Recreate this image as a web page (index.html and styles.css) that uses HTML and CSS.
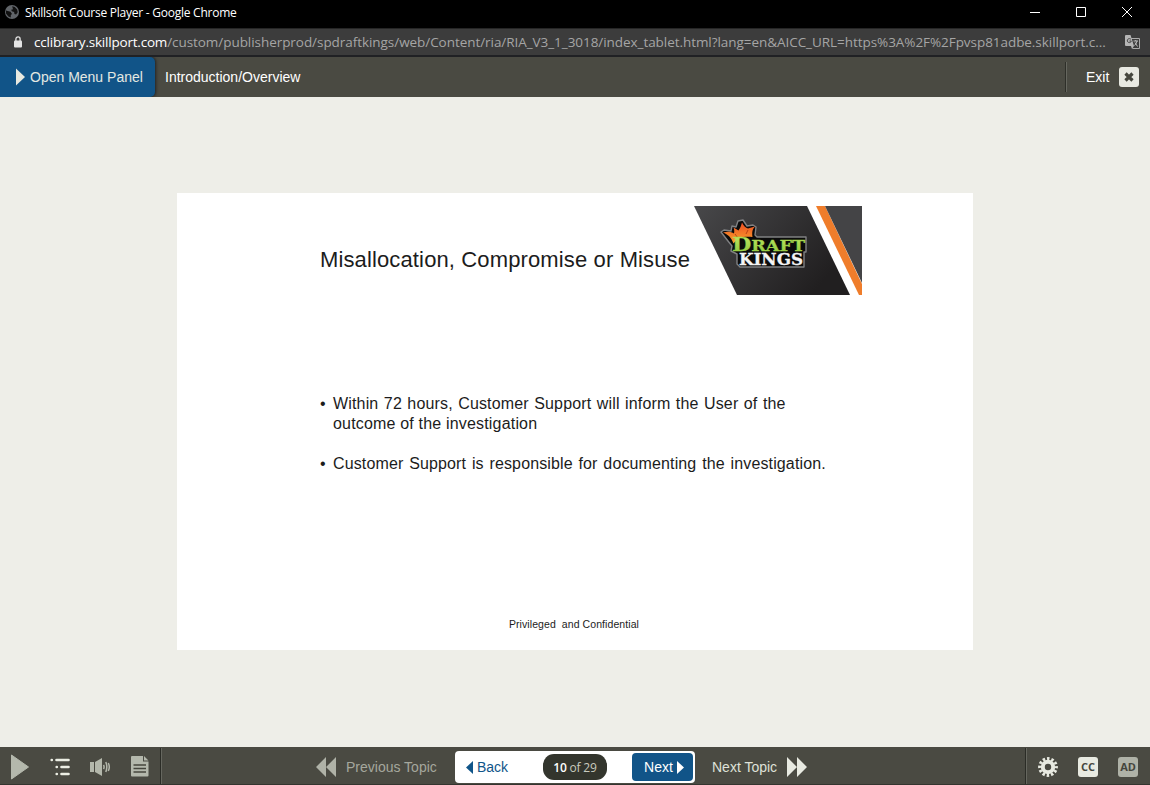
FILE: index.html
```html
<!DOCTYPE html>
<html lang="en">
<head>
<meta charset="utf-8">
<title>Skillsoft Course Player</title>
<link rel="stylesheet" href="styles.css">
</head>
<body>
<div class="titlebar">
  <svg class="globe" width="14" height="14" viewBox="0 0 14 14"><circle cx="7" cy="7" r="7" fill="#606469"/><path d="M1 5.5 5.5 6.8 7 9 5.8 10v2.6L3.4 11.5 1 8.5ZM7.2 1.2l2.6.8 2.3 2.5.6 2.8-1.6 2.2-1.6-.6-.4-2-2.3-.6-.6-1.5L8 4.3Z" fill="#111"/></svg>
  <span class="title">Skillsoft Course Player - Google Chrome</span>
  <svg class="wincontrols" width="104" height="12" viewBox="0 0 104 12" fill="none" stroke="#fff"><path d="M0 6.5h10M46.5 1.5h9v9h-9zM92 1l10 10M102 1 92 11"/></svg>
</div>
<div class="urlbar">
  <svg class="lock" width="8" height="12" viewBox="0 0 8 12"><path d="M1.9 5V3a2.1 2.1 0 0 1 4.2 0v2" fill="none" stroke="#e4e4e4" stroke-width="1.3"/><rect y="4.5" width="8" height="7" rx="1" fill="#e4e4e4"/></svg>
  <span class="url"><span class="domain">cclibrary.skillport.com</span><span class="path">/custom/publisherprod/spdraftkings/web/Content/ria/RIA_V3_1_3018/index_tablet.html?lang=en&amp;AICC_URL=https%3A%2F%2Fpvsp81adbe.skillport.c...</span></span>
  <svg class="translate" width="15" height="15" viewBox="0 0 15 15"><path d="M5 3.500h9.500v10H7.500" fill="none" stroke="#aaa"/><path d="M0 1q0-1 1-1h4.500L9 11H1q-1 0-1-1ZM6 11h3l-2 3Z" fill="#b5b5b5"/><path d="M6 4.500A2 2 0 1 0 6.300 6H4.400" fill="none" stroke="#444"/><path d="M8.500 6H13M10.700 5v1M12 6q-.7 3-2.500 4.500M10 7.500l2.500 4" fill="none" stroke="#bbb"/></svg>
</div>
<header class="topbar">
  <div class="menu-btn"><svg width="9" height="18" viewBox="0 0 9 18"><path d="M0 .5 9 9 0 17.500Z" fill="#e8e9e0"/></svg><span>Open Menu Panel</span></div>
  <span class="crumb">Introduction/Overview</span>
  <div class="exit"><span>Exit</span><span class="exit-x"><svg width="10" height="10" viewBox="0 0 10 10"><path d="m1.500 1.500 7 7m0-7-7 7" stroke="#45463d" stroke-width="3.200"/></svg></span></div>
</header>
<main class="stage">
  <section class="slide">
    <div class="slide-head">
      <h1>Misallocation, Compromise or Misuse</h1>
      <svg class="banner" width="168" height="90" viewBox="0 0 168 90">
        <defs>
          <linearGradient id="dark" x2="1" y2=".5"><stop stop-color="#48484a"/><stop offset="1" stop-color="#211f20"/></linearGradient>
          <linearGradient id="crown" x2="0" y2="1"><stop stop-color="#ee4d23"/><stop offset="1" stop-color="#f8a32b"/></linearGradient>
          <linearGradient id="green" x2="0" y2="1"><stop stop-color="#c3ea68"/><stop offset="1" stop-color="#8cc63c"/></linearGradient>
        </defs>
        <path d="M0 0H113L156 89H43Z" fill="url(#dark)"/>
        <path d="M122 0h9l37 78v11h-3Z" fill="#ef7d2b"/>
        <path d="M131 0h37v77Z" fill="#444446"/>
        <path d="m34 35-7-9 3-2 7 1 1-5 4 1 2-6 5-1 4 6 6-1 3 2-1 8 2 2h49v15h-2v15H46l-3-3V48l-6-3 1-5Z" fill="#0b0b0b" stroke="#808183" stroke-width="1.400" stroke-linejoin="round"/>
        <path d="M39.500 37.500C37 31 34 28.500 29 26.500c5-1.500 8-1 11 1 .5-2 .3-4-.5-6l5 3c2-2.500 2.500-5 3.500-8 1.500 3.500 3.500 5 6 6l7-2c-3 3-3 6-2.500 10.500-9-1-14 .5-19 6.500Z" fill="url(#crown)"/>
        <path d="m41 28 3 4M54 24l-2 4" stroke="#a83612" stroke-width=".8" fill="none"/>
        <text class="logo green" x="38" y="45" textLength="73" lengthAdjust="spacingAndGlyphs"><tspan class="cap">D</tspan>RAFT</text>
        <text class="logo white" x="45" y="59" textLength="64" lengthAdjust="spacingAndGlyphs">KINGS</text>
      </svg>
    </div>
    <ul class="points">
      <li><span class="l1">Within 72 hours, Customer Support will inform the User of the</span><br><span class="l2">outcome of the investigation</span></li>
      <li><span class="l3">Customer Support is responsible for documenting the investigation.</span></li>
    </ul>
    <div class="note">Privileged&nbsp; and Confidential</div>
  </section>
</main>
<footer class="controls">
  <div class="tools">
    <svg width="19" height="26" viewBox="0 0 19 26"><path d="M1.500 1 18.500 13 1.500 25Z" fill="#b4b8ac" stroke="#b4b8ac" stroke-linejoin="round"/></svg>
    <svg class="i-list" width="20" height="18" viewBox="0 0 20 18" fill="none" stroke="#eceee4" stroke-width="2.600" stroke-linecap="round"><path d="M1.700 2h.1M6.500 2h12M6.700 9h.1M11.500 9h7M6.700 16h.1M11.500 16h7"/></svg>
    <svg class="i-sound" width="21" height="18" viewBox="0 0 21 18"><path d="M0 4h4v10H0zM5 4l7-4v18l-7-4Z" fill="#b4b8ac"/><path d="M13.500 7q1.200 2 0 4M15.800 4q2 5 0 10M18.300 5q2 4 0 8" fill="none" stroke="#b4b8ac" stroke-width="1.500"/></svg>
    <svg class="i-doc" width="18" height="21" viewBox="0 0 18 21"><path d="M1 0h11v5.500h5.500V19.500q0 1-1 1H1q-1 0-1-1V1q0-1 1-1ZM13 0l4.500 4.500H13Z" fill="#b4b8ac"/><path d="M2.500 9h12.500M2.500 12.500h12.500M2.500 16h12.500" stroke="#45463d" stroke-width="1.400"/></svg>
  </div>
  <nav class="nav">
    <svg width="20" height="20" viewBox="0 0 20 20"><path d="M10 0v20L0 10ZM20 0v20L10 10Z" fill="#afb2a7"/></svg>
    <span class="prev">Previous Topic</span>
    <div class="pager">
      <span class="back"><svg width="7" height="13" viewBox="0 0 7 13"><path d="M7 0v13L0 6.500Z" fill="#105589"/></svg>Back</span>
      <span class="count"><b>10</b> of 29</span>
      <span class="next">Next<svg width="7" height="13" viewBox="0 0 7 13"><path d="M0 0v13l7-6.500Z" fill="#fff"/></svg></span>
    </div>
    <span class="nexttopic">Next Topic</span>
    <svg width="20" height="20" viewBox="0 0 20 20"><path d="M0 0v20l10-10ZM10 0v20l10-10Z" fill="#e8eae1"/></svg>
  </nav>
  <div class="options">
    <svg width="20" height="20" viewBox="-10 -10 20 20"><circle r="5.200" fill="none" stroke="#e8eae1" stroke-width="4"/><circle r="8.400" fill="none" stroke="#e8eae1" stroke-width="3" stroke-dasharray="2.500 1.898" stroke-dashoffset="1.250"/></svg>
    <span class="chip">CC</span>
    <span class="chip dim">AD</span>
  </div>
</footer>
</body>
</html>
```
FILE: styles.css
```css
* { box-sizing: border-box; }
body { margin: 0; width: 1150px; height: 785px; overflow: hidden; display: flex; flex-direction: column; font: 14px/20px "Liberation Sans", Arial, sans-serif; background: #eeeee8; }
svg { display: block; flex: none; }
span { white-space: nowrap; }
.titlebar { height: 28px; background: #000; color: #fff; display: flex; align-items: center; padding: 0 16px 3px 5px; font: 12px/20px "Open Sans", "Noto Sans", sans-serif; }
.globe { margin-top: -1px; }
.title { margin-left: 6px; letter-spacing: -.245px; }
.wincontrols { margin-left: auto; margin-top: -1px; }
.urlbar { height: 29px; background: #3c3c3c; border-top: 1px solid #252525; border-bottom: 2px solid #202124; display: flex; align-items: center; padding: 0 10px 0 14px; font: 13.5px/20px "Open Sans", "Noto Sans", sans-serif; color: #a5a5a5; }
.url { margin-left: 12px; }
.domain { color: #fff; letter-spacing: -.21px; }
.path { letter-spacing: -.053px; }
.translate { margin-left: auto; }
.topbar { height: 40px; background: #4a4a42; display: flex; align-items: center; color: #fff; }
.menu-btn { height: 40px; width: 155px; padding-left: 16px; display: flex; align-items: center; gap: 5px; background: #115488; color: #e4e8e2; border-radius: 0 5px 5px 0; box-shadow: 1px 0 3px #222; clip-path: inset(0 -6px 0 0); }
.crumb { margin-left: 10px; }
.exit { margin-left: auto; height: 30px; width: 85px; padding-left: 20px; border-left: 1px solid #2e2f29; box-shadow: inset 1px 0 #66675f; display: flex; align-items: center; }
.exit-x { width: 20px; height: 20px; margin-left: 10px; border-radius: 3px; background: #e8e9e1; display: grid; place-items: center; }
.stage { flex: 1; display: flex; justify-content: center; align-items: flex-start; padding-top: 96px; }
.slide { width: 796px; height: 457px; background: #fff; color: #1c1c1c; }
.slide-head { display: flex; padding: 13px 0 0 143px; height: 198px; }
h1 { margin: 41px 0 0; width: 374px; font-weight: 400; font-size: 22px; line-height: 26px; letter-spacing: .13px; white-space: nowrap; }
.logo { font: bold 15px "DejaVu Serif", serif; stroke-width: .3px; }
.cap { font-size: 19px; }
.green { fill: url(#green); stroke: #9ed044; }
.white { font-size: 17px; fill: #f4f4f4; stroke: #f4f4f4; }
.points { list-style: none; margin: 3px 0 0; padding: 0 0 0 156px; font-size: 16px; line-height: 20px; }
.points li { margin-bottom: 20px; }
.points li::before { content: "•"; display: inline-block; width: 13px; margin-left: -13px; }
.l1 { letter-spacing: .16px; word-spacing: .8px; }
.l2 { letter-spacing: .18px; }
.l3 { letter-spacing: .13px; word-spacing: 1.2px; }
.note { margin-top: 142px; padding-right: 2px; text-align: center; font-size: 10.500px; line-height: 16px; letter-spacing: .08px; }
.controls { height: 38px; background: #4a4a42; display: flex; align-items: center; border-bottom: 1px solid #34352f; }
.tools { width: 161px; height: 36px; border-right: 1px solid #2b2c26; box-shadow: 1px 0 #66675f; display: flex; align-items: center; padding: 2px 0 0 10px; }
.i-list { margin-left: 21px; }
.i-sound { margin-left: 20px; }
.i-doc { margin-left: 20px; }
.nav { flex: 1; display: flex; align-items: center; padding: 3px 0 0 155px; }
.prev { width: 91px; margin: 0 18px 0 10px; color: #a5a79d; }
.pager { width: 240px; height: 32px; border-radius: 4px; background: #fff; display: flex; align-items: center; padding: 0 2px 0 11px; }
.back { width: 77px; display: flex; align-items: center; gap: 4px; color: #105589; }
.count { width: 64px; height: 26px; border-radius: 11px; background: #33352d; color: #c9cbbf; text-align: center; font: 12px/27px "Open Sans", sans-serif; letter-spacing: -.2px; }
.count b { color: #fff; font-weight: 600; }
.next { width: 61px; height: 28px; margin-left: auto; border-radius: 4px; background: #115488; color: #fff; display: flex; align-items: center; justify-content: center; gap: 4px; padding-left: 3px; }
.nexttopic { width: 66px; margin: 0 9px 0 17px; color: #dfe1d8; }
.options { width: 125px; height: 36px; border-left: 1px solid #2b2c26; box-shadow: inset 1px 0 #66675f; display: flex; align-items: center; gap: 20px; padding: 2px 0 0 12px; }
.chip { width: 20px; height: 20px; border-radius: 3px; background: #e8eae1; color: #45463d; font: 700 11px/20px "Open Sans", sans-serif; text-align: center; }
.dim { background: #afb2a7; }
```
